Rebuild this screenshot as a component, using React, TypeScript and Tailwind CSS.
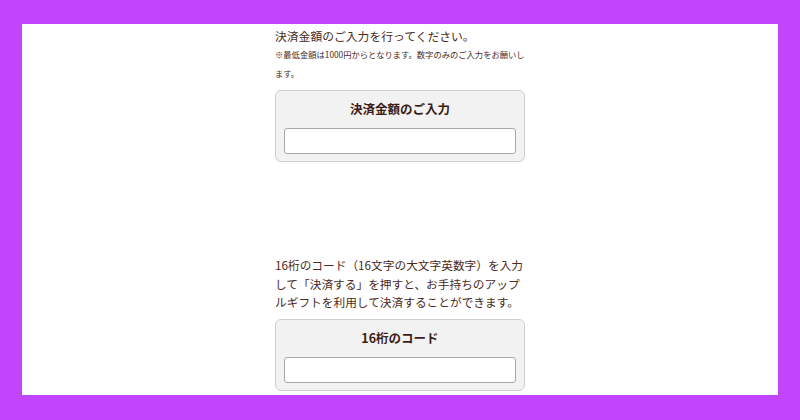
import React from "react";

const font = "font-['Noto_Sans_CJK_JP','Noto_Sans',sans-serif]";

interface CodeBoxProps {
    title: string;
}
const CodeBox: React.FC<CodeBoxProps> = ({ title }) => {
    return (
        <div className="w-full rounded-[6px] border border-[#cfcfcf] bg-[#f2f2f2] px-[8px] pt-[9px] pb-[7px]">
            <h2 className="text-center text-[12.5px] leading-[18px] font-bold text-[#3b1e18]">{title}</h2>
            <input
                type="text"
                className="mt-[10px] block h-[26px] w-full rounded-[3px] border border-[#a9a9a9] bg-white outline-none"
            />
        </div>
    );
};

const App: React.FC = () => {
    return (
        <div className={`h-[420px] w-[800px] bg-[#c245fd] pt-[24px] pr-[22px] pb-[25px] pl-[22px] ${font}`}>
            <div className="h-full w-full overflow-hidden bg-white">
                <div className="mx-auto flex w-[250px] flex-col text-[#4a2a23]">
                    <p className="mt-[3px] text-[11.8px] leading-[18px]">決済金額のご入力を行ってください。</p>
                    <p className="text-[8.3px] leading-[19px] whitespace-nowrap">
                        ※最低金額は1000円からとなります。数字のみのご入力をお願いし<br />ます。
                    </p>
                    <div className="mt-[7px]">
                        <CodeBox title="決済金額のご入力" />
                    </div>

                    <p className="mt-[94px] text-[11.7px] leading-[18.5px] whitespace-nowrap">
                        16桁のコード（16文字の大文字英数字）を入力<br />
                        して「決済する」を押すと、お手持ちのアップ<br />
                        ルギフトを利用して決済することができます。
                    </p>
                    <div className="mt-[7px]">
                        <CodeBox title="16桁のコード" />
                    </div>
                </div>
            </div>
        </div>
    );
};

export default App;
